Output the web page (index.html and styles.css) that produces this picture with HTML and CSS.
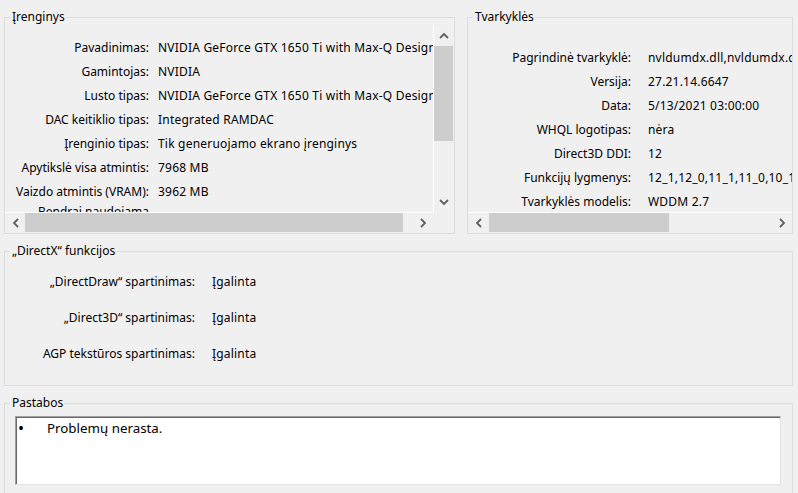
FILE: index.html
```html
<!DOCTYPE html>
<html lang="lt">
<head>
  <meta charset="UTF-8">
  <title>DirectX diagnostika - Ekranas</title>
  <link rel="stylesheet" href="styles.css">
</head>
<body>

<div class="top">
  <fieldset class="group device">
    <legend>Įrenginys</legend>
    <div class="pane">
      <div class="view">
        <div class="rows device-rows">
          <div class="row"><span class="label">Pavadinimas:</span><span class="value">NVIDIA GeForce GTX 1650 Ti with Max-Q Design</span></div>
          <div class="row"><span class="label">Gamintojas:</span><span class="value">NVIDIA</span></div>
          <div class="row"><span class="label">Lusto tipas:</span><span class="value">NVIDIA GeForce GTX 1650 Ti with Max-Q Design</span></div>
          <div class="row"><span class="label">DAC keitiklio tipas:</span><span class="value">Integrated RAMDAC</span></div>
          <div class="row"><span class="label">Įrenginio tipas:</span><span class="value">Tik generuojamo ekrano įrenginys</span></div>
          <div class="row"><span class="label">Apytikslė visa atmintis:</span><span class="value">7968 MB</span></div>
          <div class="row"><span class="label">Vaizdo atmintis (VRAM):</span><span class="value">3962 MB</span></div>
          <div class="row"><span class="label wrap">Bendrai naudojama atmintis:</span></div>
        </div>
      </div>
      <div class="vscroll">
        <div class="arrow up">
          <svg width="10" height="7" viewBox="0 0 10 7"><polyline points="1,6 5,2 9,6" fill="none" stroke="#606060" stroke-width="1.8"/></svg>
        </div>
        <div class="thumb vthumb"></div>
        <div class="track"></div>
        <div class="arrow down">
          <svg width="10" height="7" viewBox="0 0 10 7"><polyline points="1,1 5,5 9,1" fill="none" stroke="#606060" stroke-width="1.8"/></svg>
        </div>
      </div>
      <div class="hscroll">
        <div class="arrow left">
          <svg width="7" height="10" viewBox="0 0 7 10"><polyline points="6,1 2,5 6,9" fill="none" stroke="#606060" stroke-width="1.8"/></svg>
        </div>
        <div class="thumb hthumb"></div>
        <div class="track"></div>
        <div class="arrow right">
          <svg width="7" height="10" viewBox="0 0 7 10"><polyline points="1,1 5,5 1,9" fill="none" stroke="#606060" stroke-width="1.8"/></svg>
        </div>
      </div>
      <div class="corner"></div>
    </div>
  </fieldset>

  <fieldset class="group drivers">
    <legend>Tvarkyklės</legend>
    <div class="pane">
      <div class="view">
        <div class="rows driver-rows">
          <div class="row"><span class="label">Pagrindinė tvarkyklė:</span><span class="value">nvldumdx.dll,nvldumdx.dll,nvldumdx.dll,nvldumdx.dll</span></div>
          <div class="row"><span class="label">Versija:</span><span class="value">27.21.14.6647</span></div>
          <div class="row"><span class="label">Data:</span><span class="value">5/13/2021 03:00:00</span></div>
          <div class="row"><span class="label">WHQL logotipas:</span><span class="value">nėra</span></div>
          <div class="row"><span class="label">Direct3D DDI:</span><span class="value">12</span></div>
          <div class="row"><span class="label">Funkcijų lygmenys:</span><span class="value">12_1,12_0,11_1,11_0,10_1,10_0,9_3,9_2,9_1</span></div>
          <div class="row"><span class="label">Tvarkyklės modelis:</span><span class="value">WDDM 2.7</span></div>
        </div>
      </div>
      <div class="hscroll">
        <div class="arrow left wide">
          <svg width="7" height="10" viewBox="0 0 7 10"><polyline points="6,1 2,5 6,9" fill="none" stroke="#606060" stroke-width="1.8"/></svg>
        </div>
        <div class="thumb hthumb short"></div>
        <div class="track"></div>
        <div class="arrow right">
          <svg width="7" height="10" viewBox="0 0 7 10"><polyline points="1,1 5,5 1,9" fill="none" stroke="#606060" stroke-width="1.8"/></svg>
        </div>
      </div>
    </div>
  </fieldset>
</div>

<fieldset class="group features">
  <legend>„DirectX“ funkcijos</legend>
  <div class="rows feature-rows">
    <div class="row"><span class="label">„DirectDraw“ spartinimas:</span><span class="value">Įgalinta</span></div>
    <div class="row"><span class="label">„Direct3D“ spartinimas:</span><span class="value">Įgalinta</span></div>
    <div class="row"><span class="label">AGP tekstūros spartinimas:</span><span class="value">Įgalinta</span></div>
  </div>
</fieldset>

<fieldset class="group notes">
  <legend>Pastabos</legend>
  <div class="notes-box">
    <div class="note"><span class="bullet">•</span><span>Problemų nerasta.</span></div>
  </div>
</fieldset>

</body>
</html>
```

FILE: styles.css
```css
html, body {
  margin: 0;
  height: 100%;
  overflow: hidden;
}

body {
  box-sizing: border-box;
  padding: 9px 0 0 4px;
  background-color: #f0f0f0;
  color: #000;
  font-family: "Noto Sans", sans-serif;
  font-size: 12px;
  line-height: 16px;
}

.group {
  box-sizing: border-box;
  min-width: 0;
  margin: 0;
  padding: 0;
  border: 1px solid #dcdcdc;
}

.group legend {
  margin-left: 5px;
  padding: 0 1px 0 2px;
  line-height: 16px;
}

.top {
  display: flex;
  gap: 12px;
}

.device {
  width: 451px;
}

.drivers {
  width: 326px;
}

.pane {
  display: grid;
  grid-template-columns: 428px 21px;
  grid-template-rows: 187px 21px;
}

.drivers .pane {
  grid-template-columns: 324px;
}

.view {
  overflow: hidden;
}

.rows {
  display: flex;
  flex-direction: column;
}

.row {
  display: flex;
  align-items: center;
  height: 24px;
  white-space: nowrap;
}

.label {
  flex: none;
  text-align: right;
}

.value {
  letter-spacing: 0.2px;
}

.device-rows {
  padding-top: 11px;
}

.device-rows .label {
  width: 144px;
}

.device-rows .value {
  margin-left: 9px;
}

.label.wrap {
  align-self: flex-start;
  white-space: normal;
}

.driver-rows {
  padding-top: 21px;
}

.driver-rows .label {
  width: 163px;
}

.driver-rows .value {
  margin-left: 17px;
}

/* scrollbars */
.vscroll {
  display: flex;
  flex-direction: column;
  border-left: 1px solid #fff;
}

.hscroll {
  display: flex;
  border-top: 1px solid #fff;
}

.arrow {
  display: flex;
  align-items: center;
  justify-content: center;
  flex: none;
}

.vscroll .arrow {
  height: 20px;
}

.vscroll .arrow.up {
  height: 21px;
}

.hscroll .arrow {
  width: 20px;
}

.hscroll .arrow.wide {
  width: 21px;
}

.track {
  flex: 1;
}

.thumb {
  flex: none;
  background-color: #cdcdcd;
}

.vthumb {
  width: 19px;
  height: 95px;
}

.hthumb {
  width: 378px;
  height: 19px;
}

.hthumb.short {
  width: 180px;
}

/* DirectX features */
.features {
  width: 789px;
  margin-top: 9px;
}

.feature-rows {
  padding: 5px 0 13px;
}

.feature-rows .row {
  height: 36px;
}

.feature-rows .label {
  width: 190px;
}

.feature-rows .value {
  margin-left: 17px;
}

/* notes */
.notes {
  width: 789px;
  margin-top: 9px;
}

.notes-box {
  height: 69px;
  margin: 5px 11px 9px 10px;
  box-sizing: border-box;
  padding: 2px 0 0 2px;
  background-color: #fff;
  border-top: 1px solid #a0a0a0;
  border-left: 1px solid #a0a0a0;
  border-right: 1px solid #e3e3e3;
  border-bottom: 1px solid #e3e3e3;
  box-shadow: inset 1px 1px 0 #696969;
  font-size: 13.33px;
  line-height: 18px;
}

.note {
  display: flex;
}

.bullet {
  width: 29px;
  flex: none;
  font-size: 16px;
}
```
